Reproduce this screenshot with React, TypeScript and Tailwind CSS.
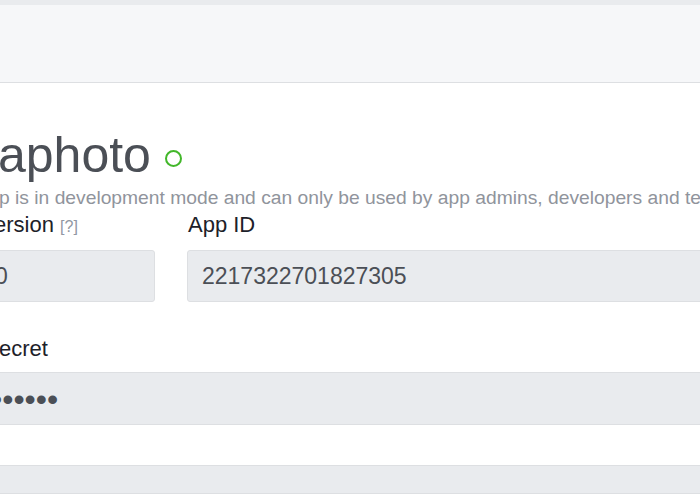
export default function App() {
  return (
    <div className="w-[700px] h-[500px] overflow-hidden bg-white font-['Liberation_Sans',Arial,sans-serif]">
      <div className="h-[5px] bg-[#e9ebee]" />
      <div className="h-[78px] bg-[#f6f7f9] border-b border-[#dddfe2]" />
      <div className="ml-[-20px] w-[960px]">
        <div className="mt-[47px] flex items-center h-[50px]">
          <span className="pl-[18px] text-[50px] leading-none text-[#4b4f56]">aphoto</span>
          <span className="ml-[14px] mt-[6px] w-[17px] h-[17px] rounded-full border-2 border-[#42b72a]" />
        </div>
        <div className="mt-[7px] pl-[19px] text-[19.25px] leading-[22px] text-[#90949c] whitespace-nowrap">
          p is in development mode and can only be used by app admins, developers and testers.
        </div>
        <div className="mt-[3px] flex gap-[32px]">
          <div className="w-[175px] flex flex-col">
            <div className="pl-[14px] h-[26px] text-[22px] leading-[26px] text-[#1d2129] whitespace-nowrap">
              ersion <span className="text-[16px] text-[#9197a3]">[?]</span>
            </div>
            <div className="mt-[12px] h-[52px] rounded-[3px] border border-[#dddfe2] bg-[#e9ebee] flex items-center pl-[14px] text-[23px] text-[#4b4f56]">
              0
            </div>
          </div>
          <div className="flex-1 flex flex-col">
            <div className="pl-[1px] h-[26px] text-[22px] leading-[26px] text-[#1d2129]">App ID</div>
            <div className="mt-[12px] h-[52px] rounded-[3px] border border-[#dddfe2] bg-[#e9ebee] flex items-center pl-[14px] text-[23px] text-[#4b4f56]">
              2217322701827305
            </div>
          </div>
        </div>
        <div className="mt-[34px] pl-[19px] h-[26px] text-[22px] leading-[26px] text-[#1d2129]">ecret</div>
        <div className="mt-[10px] h-[53px] rounded-[3px] border border-[#dddfe2] bg-[#e9ebee] flex items-center pl-[10px] text-[32px] leading-none text-[#4b4f56]">
          ••••••
        </div>
        <div className="mt-[40px] h-[29px] rounded-[3px] border border-[#dddfe2] bg-[#e9ebee]" />
      </div>
    </div>
  );
}
